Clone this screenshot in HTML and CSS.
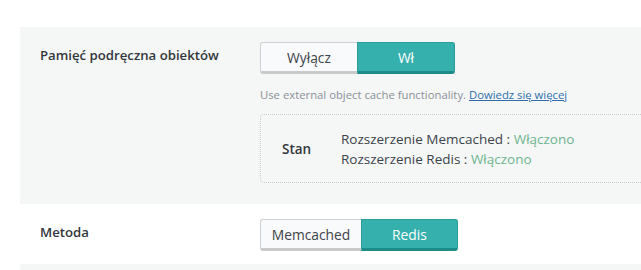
FILE: index.html
```html
<!DOCTYPE html>
<html lang="pl">
<head>
<meta charset="utf-8">
<link rel="stylesheet" href="styles.css">
</head>
<body>
<div class="page">
  <div class="row row-gray">
    <div class="label">Pamięć podręczna obiektów</div>
    <div class="control">
      <div class="toggle">
        <span class="btn btn-off w97">Wyłącz</span>
        <span class="btn btn-on w98">Wł</span>
      </div>
      <p class="help">Use external object cache functionality. <a href="#">Dowiedz się więcej</a></p>
      <div class="status">
        <div class="status-title">Stan</div>
        <div class="status-lines">
          <div>Rozszerzenie Memcached : <span class="ok">Włączono</span></div>
          <div>Rozszerzenie Redis : <span class="ok">Włączono</span></div>
        </div>
      </div>
    </div>
  </div>
  <div class="row row-white">
    <div class="label">Metoda</div>
    <div class="control">
      <div class="toggle">
        <span class="btn btn-off w101">Memcached</span>
        <span class="btn btn-on w97">Redis</span>
      </div>
    </div>
  </div>
  <div class="row row-gray row-tail"></div>
</div>
</body>
</html>
```

FILE: styles.css
```css
html, body {
  margin: 0;
  padding: 0;
  background: #ffffff;
}
body {
  font-family: "Open Sans", "Noto Sans", sans-serif;
  color: #32373c;
  font-size: 13px;
}
.page {
  padding: 27px 0 0 20px;
}
.row {
  display: grid;
  grid-template-columns: 220px 1fr;
  padding-left: 20px;
}
.row-gray {
  background: #f5f7f7;
  padding-top: 15px;
  padding-bottom: 21px;
}
.row-white {
  background: #ffffff;
  padding-top: 15px;
  padding-bottom: 13px;
}
.row-tail {
  height: 40px;
  padding: 0;
}
.label {
  font-weight: 600;
  font-size: 13.2px;
  line-height: 20px;
  padding-top: 3px;
  color: #32373c;
}
.control {
  min-width: 0;
}
.toggle {
  display: flex;
}
.btn {
  box-sizing: border-box;
  height: 32px;
  display: flex;
  align-items: center;
  justify-content: center;
  font-size: 13.8px;
  padding-top: 1px;
}
.w97 { width: 97px; }
.w98 { width: 98px; }
.w101 { width: 101px; }
.btn-off {
  background: #f9fafb;
  border: 1px solid #cfd2d4;
  border-bottom: 3px solid #c8cacc;
  border-right: none;
  border-radius: 3px 0 0 3px;
  color: #3c434a;
}
.btn-on {
  background: #36b0ad;
  border: 1px solid #2a9d9a;
  border-bottom: 3px solid #1d8c88;
  border-radius: 0 3px 3px 0;
  color: #ffffff;
}
.help {
  margin: 12px 0 0 0;
  font-size: 11.3px;
  line-height: 18px;
  color: #8a9096;
}
.help a {
  color: #2f6eaa;
  text-decoration: underline;
}
.status {
  margin-top: 10px;
  box-sizing: border-box;
  height: 69px;
  border: 1px dotted #c9cccd;
  border-right: none;
  border-radius: 4px 0 0 4px;
  display: flex;
  align-items: center;
  padding: 1px 0 0 21px;
}
.status-title {
  width: 59px;
  font-weight: 600;
  font-size: 13.5px;
}
.status-lines {
  font-size: 13.5px;
  line-height: 20px;
  color: #3c434a;
}
.ok {
  color: #6fb58f;
}
```
